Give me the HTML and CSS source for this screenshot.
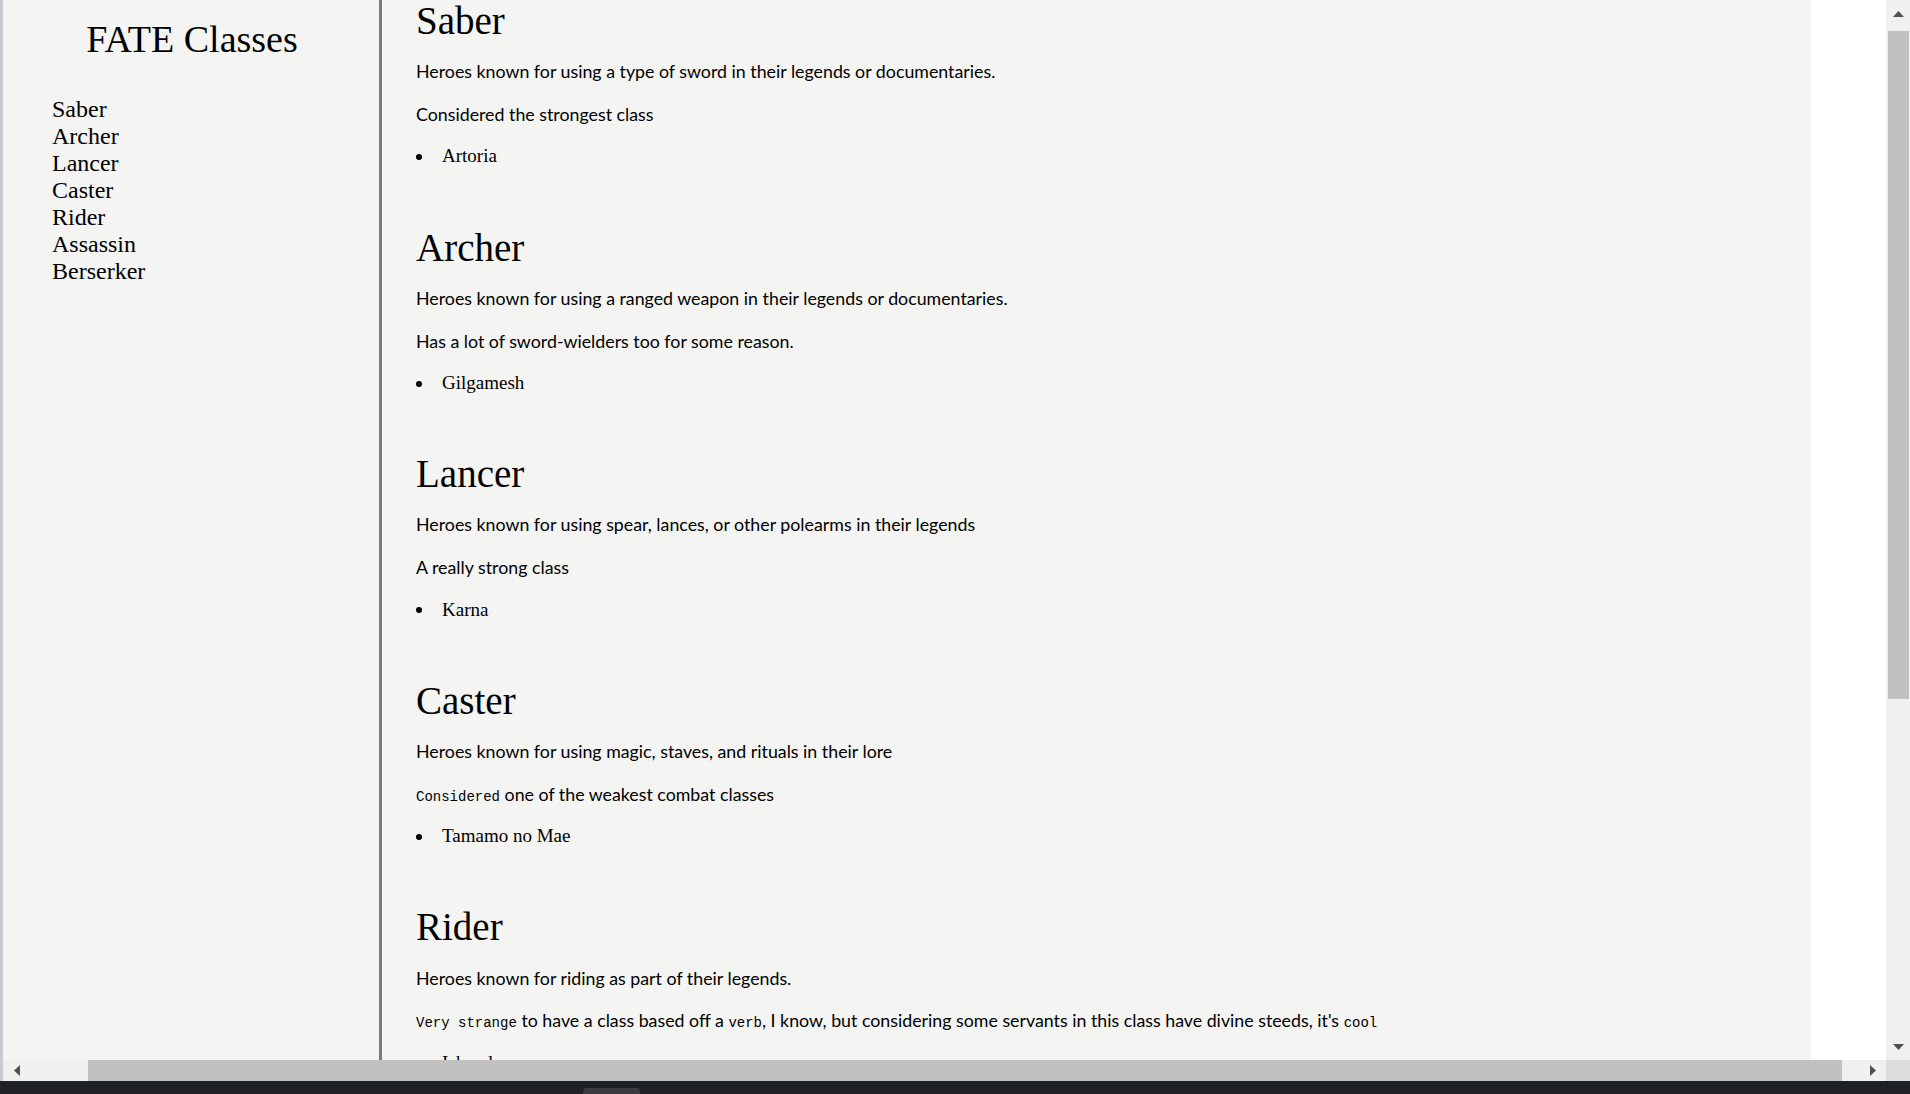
FILE: index.html
```html
<!DOCTYPE html>
<html lang="en">
<head>
<meta charset="utf-8">
<title>FATE Classes</title>
<link rel="stylesheet" href="styles.css">
</head>
<body>
<div class="window">
  <div class="frame-left"></div>
  <div class="viewport">
    <div class="page">
      <nav class="nav" id="navbar">
        <header class="nav-title">FATE Classes</header>
        <ul class="nav-list">
          <li><a class="nav-link" href="#Saber">Saber</a></li>
          <li><a class="nav-link" href="#Archer">Archer</a></li>
          <li><a class="nav-link" href="#Lancer">Lancer</a></li>
          <li><a class="nav-link" href="#Caster">Caster</a></li>
          <li><a class="nav-link" href="#Rider">Rider</a></li>
          <li><a class="nav-link" href="#Assassin">Assassin</a></li>
          <li><a class="nav-link" href="#Berserker">Berserker</a></li>
        </ul>
      </nav>
      <main class="main" id="main-doc">
        <section class="section" id="Saber">
          <header class="sec-title">Saber</header>
          <p class="sec-text">Heroes known for using a type of sword in their legends or documentaries.</p>
          <p class="sec-text">Considered the strongest class</p>
          <ul class="sec-list"><li>Artoria</li></ul>
        </section>
        <section class="section" id="Archer">
          <header class="sec-title">Archer</header>
          <p class="sec-text">Heroes known for using a ranged weapon in their legends or documentaries.</p>
          <p class="sec-text">Has a lot of sword-wielders too for some reason.</p>
          <ul class="sec-list"><li>Gilgamesh</li></ul>
        </section>
        <section class="section" id="Lancer">
          <header class="sec-title">Lancer</header>
          <p class="sec-text">Heroes known for using spear, lances, or other polearms in their legends</p>
          <p class="sec-text">A really strong class</p>
          <ul class="sec-list"><li>Karna</li></ul>
        </section>
        <section class="section" id="Caster">
          <header class="sec-title">Caster</header>
          <p class="sec-text">Heroes known for using magic, staves, and rituals in their lore</p>
          <p class="sec-text"><code>Considered</code> one of the weakest combat classes</p>
          <ul class="sec-list"><li>Tamamo no Mae</li></ul>
        </section>
        <section class="section" id="Rider">
          <header class="sec-title">Rider</header>
          <p class="sec-text">Heroes known for riding as part of their legends.</p>
          <p class="sec-text"><code>Very </code><code>strange</code> to have a class based off a <code>verb</code>, I know, but considering some servants in this class have divine steeds, it's <code>cool</code></p>
          <ul class="sec-list"><li>Iskandar</li></ul>
        </section>
        <section class="section" id="Assassin">
          <header class="sec-title">Assassin</header>
          <p class="sec-text">Heroes known for stealth and assassination in their legends.</p>
        </section>
        <section class="section" id="Berserker">
          <header class="sec-title">Berserker</header>
          <p class="sec-text">Heroes known for their madness in their legends.</p>
        </section>
      </main>
    </div>
  </div>
  <div class="vscroll">
    <div class="sb-btn"><svg width="11" height="6" viewBox="0 0 11 6"><polygon points="0,6 11,6 5.5,0" fill="#505050"/></svg></div>
    <div class="vtrack"><div class="vthumb"></div></div>
    <div class="sb-btn"><svg width="11" height="6" viewBox="0 0 11 6"><polygon points="0,0 11,0 5.5,6" fill="#505050"/></svg></div>
  </div>
  <div class="frame-left2"></div>
  <div class="hscroll">
    <div class="hb-btn"><svg width="6" height="11" viewBox="0 0 6 11"><polygon points="6,0 6,11 0,5.5" fill="#505050"/></svg></div>
    <div class="htrack"><div class="hthumb"></div></div>
    <div class="hb-btn"><svg width="6" height="11" viewBox="0 0 6 11"><polygon points="0,0 0,11 6,5.5" fill="#505050"/></svg></div>
  </div>
  <div class="corner"></div>
  <div class="taskbar"><div class="task-item"></div></div>
</div>
</body>
</html>
```
FILE: styles.css
```css
html, body {
  margin: 0;
  padding: 0;
  width: 1910px;
  height: 1094px;
  overflow: hidden;
  background: #ffffff;
}

.window {
  display: grid;
  grid-template-columns: 3px 1883px 24px;
  grid-template-rows: 1060px 21px 13px;
  width: 1910px;
  height: 1094px;
}

.frame-left, .frame-left2 {
  background: #c9c9d1;
}

.viewport {
  overflow: hidden;
  background: #ffffff;
}

.page {
  display: flex;
  width: 1808px;
  height: 1060px;
  background: #f4f4f2;
}

/* NAV */
.nav {
  width: 376px;
  flex: none;
  border-right: 3px solid #7b7b7b;
  font-family: "Liberation Serif", "Times New Roman", serif;
  color: #000;
}

.nav-title {
  font-size: 38px;
  line-height: 40px;
  text-align: center;
  margin-top: 19px;
  padding-left: 2px;
}

.nav-list {
  list-style: none;
  margin: 37px 0 0 0;
  padding: 0 0 0 49px;
}

.nav-list li {
  font-size: 24px;
  line-height: 27px;
}

.nav-link {
  color: #000;
  text-decoration: none;
}

/* MAIN */
.main {
  flex: 1;
  padding-left: 34px;
  padding-top: 1px;
  overflow: hidden;
  color: #000;
}

.section {
  padding-bottom: 61.1px;
}

.sec-title {
  font-family: "Liberation Serif", "Times New Roman", serif;
  font-size: 39px;
  line-height: 40px;
}

.sec-text {
  font-family: Lato, "Open Sans", sans-serif;
  font-size: 17.8px;
  line-height: 20px;
  margin: 22.7px 0 0 0;
}

.sec-title + .sec-text {
  margin-top: 20.3px;
}

.sec-text code {
  font-family: "Liberation Mono", "Courier New", monospace;
  font-size: 14px;
  line-height: 1;
}

.sec-list {
  list-style: none;
  margin: 22.5px 0 0 0;
  padding: 0;
  font-family: "Liberation Serif", "Times New Roman", serif;
  font-size: 19px;
  line-height: 20px;
}

.sec-list li::before {
  content: "";
  display: inline-block;
  width: 6px;
  height: 6px;
  border-radius: 50%;
  background: #000;
  margin: 0 20px 2px 0;
  vertical-align: middle;
}

/* SCROLLBARS */
.vscroll {
  display: flex;
  flex-direction: column;
  background: #f0f0f0;
}

.sb-btn {
  height: 27px;
  display: flex;
  align-items: center;
  justify-content: center;
}

.vtrack {
  flex: 1;
  padding: 4px 1px 0 2px;
}

.vthumb {
  height: 668px;
  background: #c1c1c1;
}

.hscroll {
  display: flex;
  background: #f0f0f0;
}

.hb-btn {
  width: 27px;
  display: flex;
  align-items: center;
  justify-content: center;
}

.htrack {
  flex: 1;
  padding-left: 58px;
}

.hthumb {
  width: 1754px;
  height: 21px;
  background: #c1c1c1;
}

.corner {
  background: #dcdcdc;
}

.taskbar {
  grid-column: 1 / 4;
  background: #202124;
  display: flex;
  align-items: flex-end;
  padding-left: 583px;
}

.task-item {
  width: 57px;
  height: 6px;
  background: #3a3b3f;
  border-radius: 4px 4px 0 0;
}
```
